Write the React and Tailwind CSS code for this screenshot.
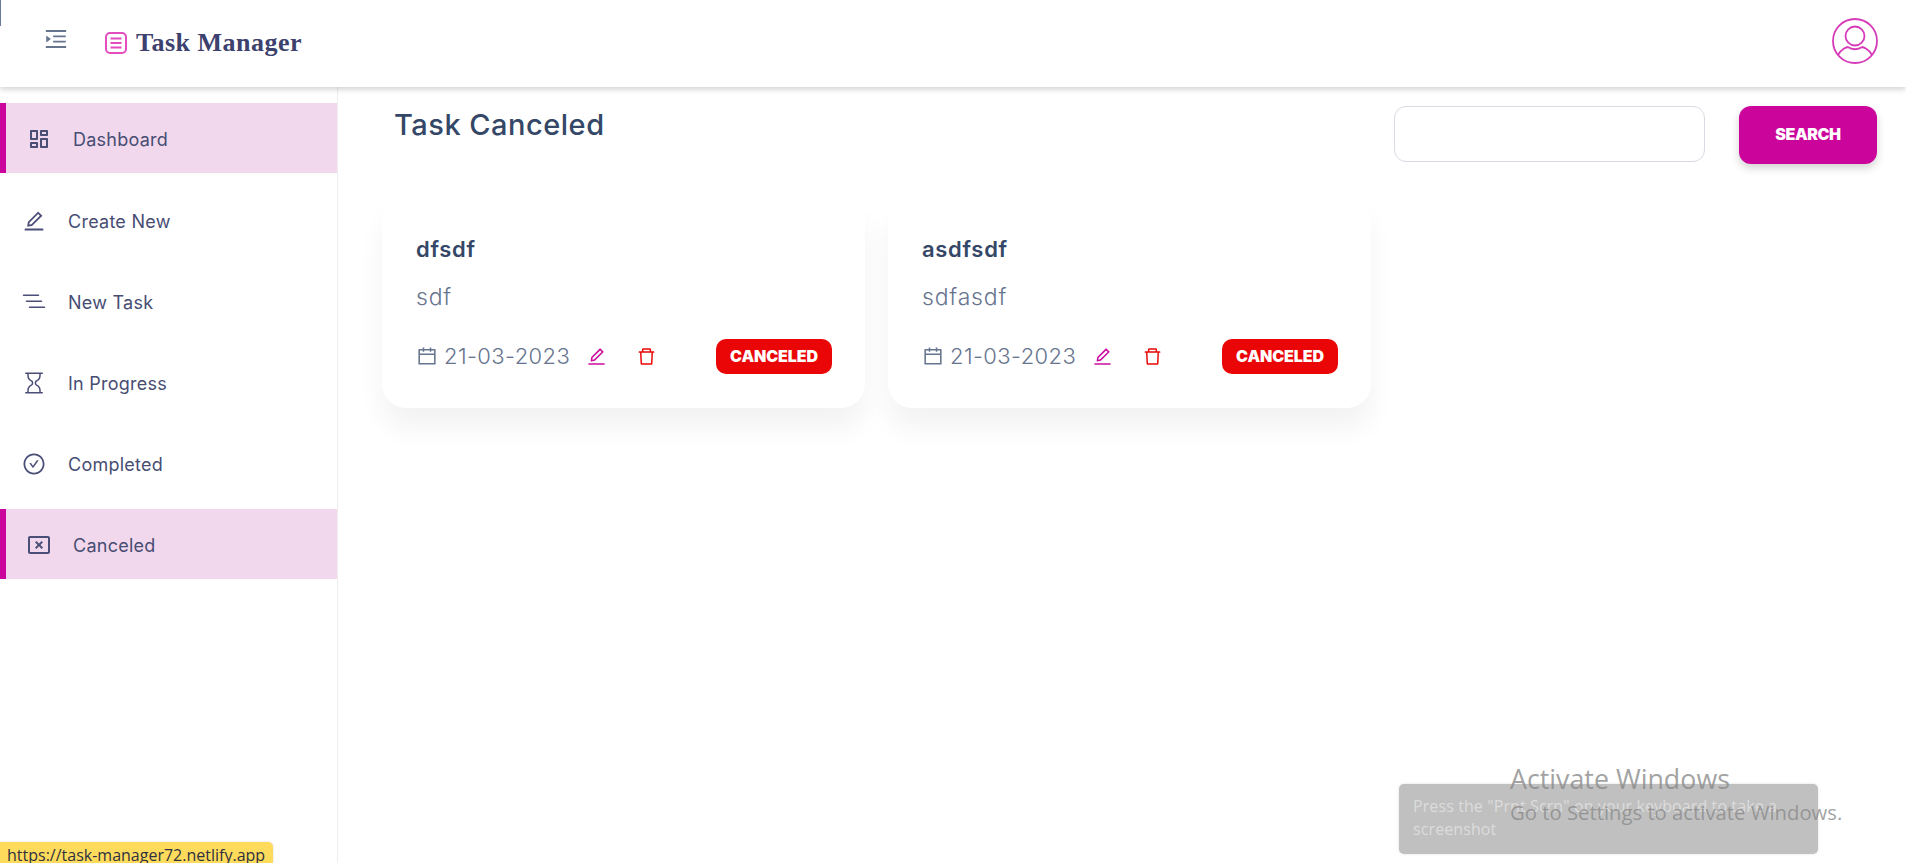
import React from "react";
import { AiOutlineCheckCircle, AiOutlineEdit, AiOutlineMenuUnfold, AiOutlineCalendar, AiOutlineDelete } from "react-icons/ai";
import { BsHourglass, BsListNested } from "react-icons/bs";
import { RiDashboardLine } from "react-icons/ri";
import { MdOutlineCancelPresentation } from "react-icons/md";

const items = [
  { label: "Dashboard", Icon: RiDashboardLine, active: true, mb: "mb-[12px]" },
  { label: "Create New", Icon: AiOutlineEdit, mb: "mb-[11px]" },
  { label: "New Task", Icon: BsListNested, mb: "mb-[11px]" },
  { label: "In Progress", Icon: BsHourglass, mb: "mb-[11px]" },
  { label: "Completed", Icon: AiOutlineCheckCircle, mb: "mb-[11px]" },
  { label: "Canceled", Icon: MdOutlineCancelPresentation, active: true, mb: "mb-[11px]" },
];

function NavItem({ label, Icon, active, mb }) {
  return (
    <div
      className={
        "flex items-center h-[70px] " +
        mb +
        (active ? " bg-[#f2d8ec] border-l-[6px] border-[#cb059b] pl-[21px]" : " pl-[22px]")
      }
    >
      <span className="w-[24px] h-[24px] mt-[1px] flex items-center justify-center text-[#4b4f78]">
        <Icon size={24} />
      </span>
      <span className="ml-[22px] pt-[2px] text-[18px] tracking-[0.25px] text-[#474d73]">{label}</span>
    </div>
  );
}

function Card({ title, desc }) {
  return (
    <div className="w-[483px] h-[211px] bg-white rounded-[24px] shadow-[0_20px_27px_rgba(0,0,0,0.05)] pl-[34px] pr-[33px] pt-[34px]">
      <div className="text-[22px] leading-[36px] font-semibold tracking-[0.7px] text-[#344767]">{title}</div>
      <div className="mt-[12px] text-[23px] leading-[36px] font-light tracking-[0.8px] text-[#67748e]">{desc}</div>
      <div className="mt-[23px] flex items-center h-[36px]">
        <AiOutlineCalendar size={22} className="text-[#67748e]" />
        <span className="ml-[6px] w-[128px] text-[22px] font-light tracking-[0.4px] text-[#67748e]">21-03-2023</span>
        <AiOutlineEdit size={21} className="ml-[14px] text-[#cb0c9f]" />
        <AiOutlineDelete size={21} className="ml-[29px] text-[#ea0606]" />
        <span className="ml-auto w-[116px] h-[35px] rounded-[10px] bg-[#ea0606] text-white text-[16px] font-black tracking-[-0.1px] flex items-center justify-center">
          CANCELED
        </span>
      </div>
    </div>
  );
}

export default function App() {
  return (
    <div className="relative h-[863px] overflow-hidden bg-white font-['Inter',sans-serif]">
      <header className="relative z-10 h-[87px] bg-white shadow-[0_2px_6px_rgba(0,0,0,0.2)] flex items-center pl-[43px] pr-[28px]">
        <AiOutlineMenuUnfold size={26} className="text-[#67748e] -mt-[9px]" />
        <svg viewBox="0 0 24 24" width="24" height="24" fill="none" stroke="#e24dbf" strokeWidth="2" className="ml-[35px] -mt-[2px]">
          <rect x="2" y="2" width="20" height="20" rx="4" />
          <path d="M6.5 7.5h11M6.5 12h11M6.5 16.5h11" />
        </svg>
        <span className="ml-[8px] -mt-[2px] text-[26px] font-bold tracking-[0.5px] text-[#3c416e] font-['Liberation_Serif',serif]">
          Task Manager
        </span>
        <svg viewBox="0 0 46 46" width="46" height="46" fill="none" stroke="#d63ab8" strokeWidth="1.8" className="ml-auto -mt-[6px]">
          <circle cx="23" cy="23" r="22" />
          <circle cx="23" cy="18" r="9.5" />
          <path d="M6 37c3-6 9-8 10-8M40 37c-3-6-9-8-10-8M16 29c4 3 10 3 14 0" />
        </svg>
      </header>

      <div className="flex h-[776px]">
        <aside className="w-[338px] shrink-0 border-r border-[#eeeeee] pt-[16px]">
          {items.map((it) => (
            <NavItem key={it.label} {...it} />
          ))}
        </aside>
        <main className="flex-1 pl-[44px] pr-[29px]">
          <div className="flex items-start pt-[19px]">
            <h1 className="ml-[12px] mt-[1px] text-[29px] leading-[36px] font-medium tracking-[0.5px] text-[#344767]">Task Canceled</h1>
            <input className="ml-auto w-[311px] h-[56px] rounded-[12px] border-[1.5px] border-[#d8dbe3] bg-white" />
            <button className="ml-[34px] w-[138px] h-[58px] pb-[2px] rounded-[12px] bg-[#cb059b] text-white text-[16px] font-black tracking-[-0.4px] shadow-[0_4px_8px_rgba(0,0,0,0.18)]">
              SEARCH
            </button>
          </div>
          <div className="flex gap-[23px] mt-[33px]">
            <Card title="dfsdf" desc="sdf" />
            <Card title="asdfsdf" desc="sdfasdf" />
          </div>
        </main>
      </div>

      <div className="absolute left-0 top-0 w-[1px] h-[26px] bg-[#6a7a9a] z-20" />

      <div className="absolute left-0 top-[842px] w-[273px] h-[25px] z-20 rounded-tr-[5px] bg-[#ffdb5c] shadow-[0_0_2px_rgba(0,0,0,0.2)] pl-[7px] text-[16px] leading-[27px] text-[#2f3140] font-['Open_Sans',sans-serif]">
        https://task-manager72.netlify.app
      </div>

      <div className="absolute left-[1399px] top-[784px] w-[419px] h-[70px] z-20 rounded-[5px] bg-[#c0c0c0] shadow-[0_0_3px_rgba(0,0,0,0.12)] pl-[14px] pt-[11px] text-[16px] leading-[23px] tracking-[0.1px] text-[#dcdcdc] font-['Open_Sans',sans-serif]">
        Press the "Prnt Scrn" on your keyboard to take a
        <br />
        screenshot
      </div>

      <div className="absolute left-[1510px] top-[762px] z-30 text-[#8a8a8a]/80 font-['Open_Sans',sans-serif]">
        <div className="text-[26.8px] leading-[34px]">Activate Windows</div>
        <div className="text-[20.3px] leading-[24px] mt-[4px]">Go to Settings to activate Windows.</div>
      </div>
    </div>
  );
}
